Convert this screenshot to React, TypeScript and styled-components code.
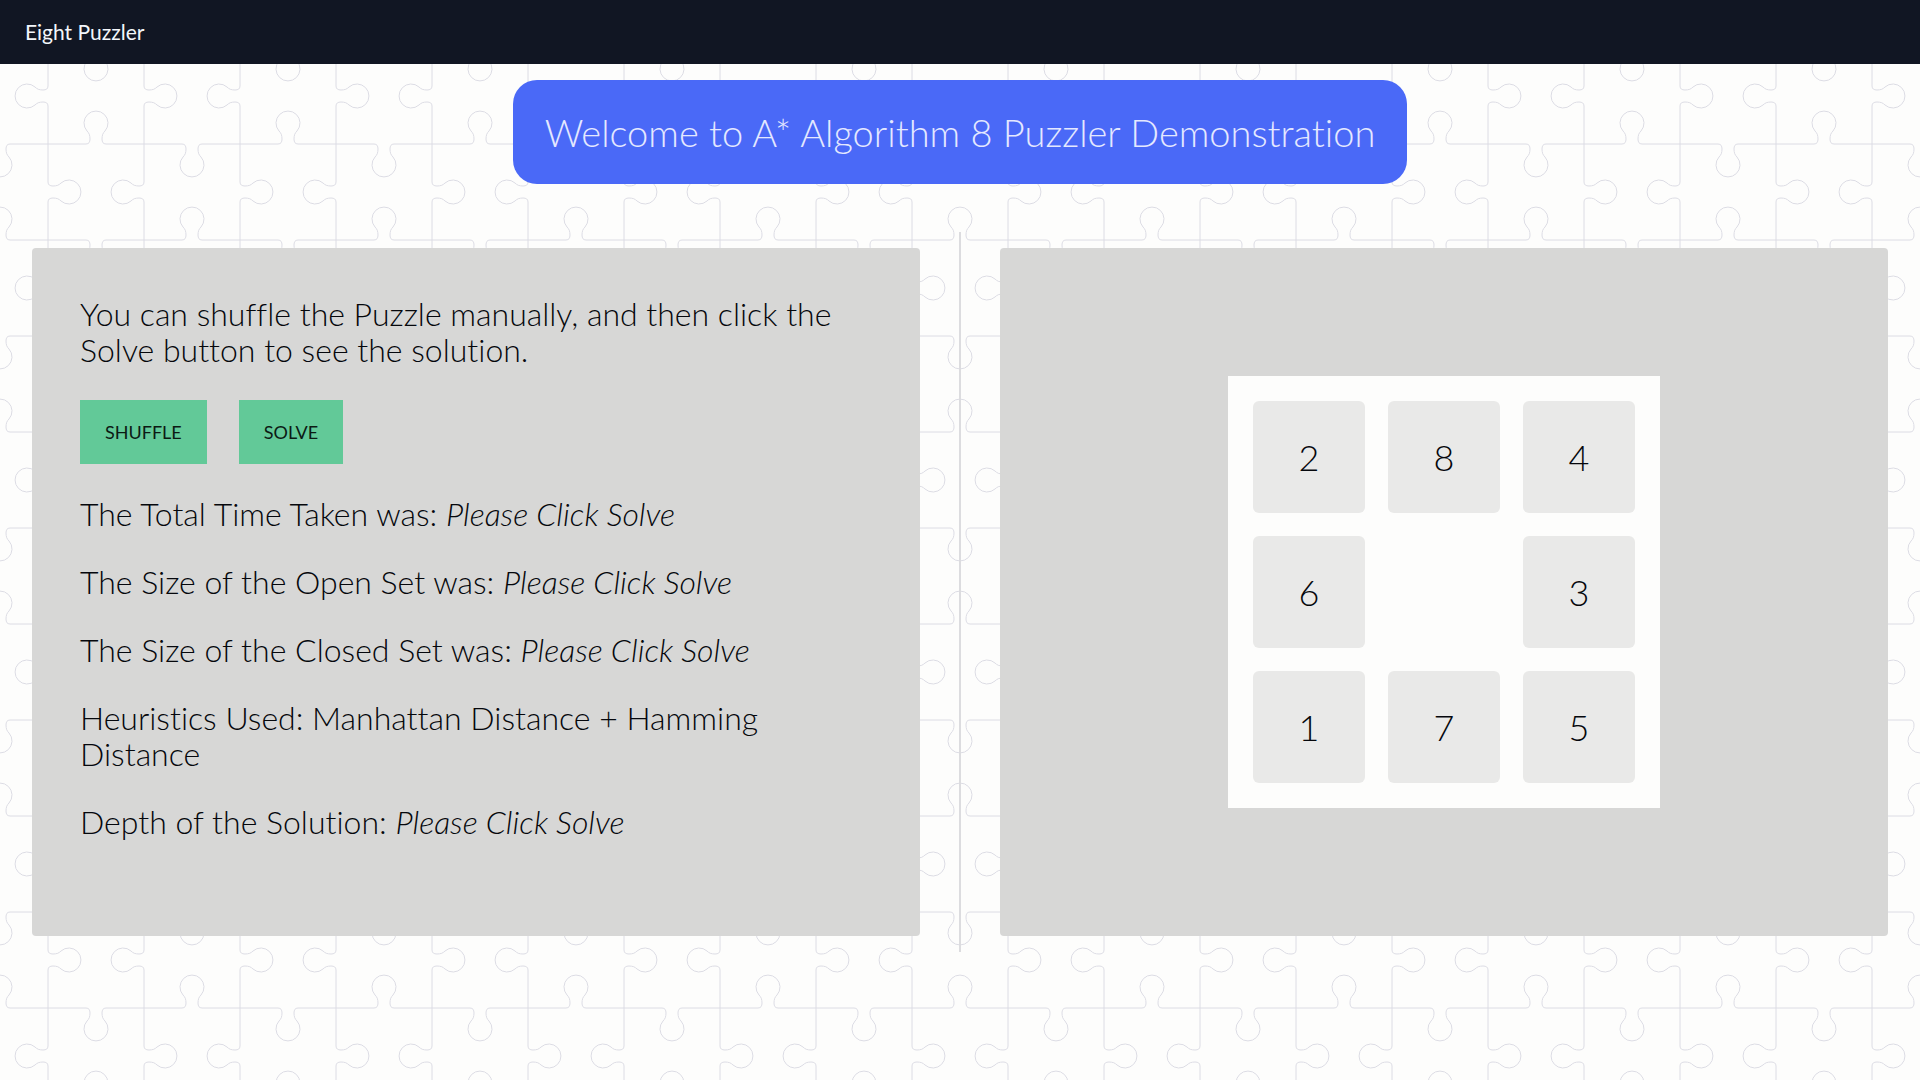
import React, { useState } from "react";
import styled, { createGlobalStyle } from "styled-components";

/* Repeating jigsaw outline: one 96px edge with a knob, placed around a 192px tile. */
const knobEdge =
  "M-48 0h38c3 0 4-2 4-5c0-4-1-6-3-8a12 12 0 1 1 18 0c-2 2-3 4-3 8c0 3 1 5 4 5h38";

const placeEdge = (x: number, y: number, turn: number) =>
  `<path d="${knobEdge}" transform="translate(${x} ${y}) rotate(${turn})"/>`;

const UP = 0;
const RIGHT = 90;
const DOWN = 180;
const LEFT = -90;

const jigsaw = [
  `<svg xmlns="http://www.w3.org/2000/svg" width="192" height="192">`,
  `<g fill="none" stroke="#dcdce4" stroke-width="1">`,
  placeEdge(0, 48, UP), placeEdge(96, 48, DOWN), placeEdge(192, 48, UP),
  placeEdge(0, 144, DOWN), placeEdge(96, 144, UP), placeEdge(192, 144, DOWN),
  placeEdge(48, 0, RIGHT), placeEdge(48, 96, LEFT), placeEdge(48, 192, RIGHT),
  placeEdge(144, 0, LEFT), placeEdge(144, 96, RIGHT), placeEdge(144, 192, LEFT),
  `</g></svg>`,
].join("");

const GlobalStyle = createGlobalStyle`
  *, *::before, *::after { box-sizing: border-box; }
  body {
    margin: 0;
    background: #fdfdfc url("data:image/svg+xml,${encodeURIComponent(jigsaw)
      .replace(/\(/g, "%28")
      .replace(/\)/g, "%29")}");
    color: #05070c;
    font-family: Lato, "Open Sans", sans-serif;
    font-weight: 300;
    font-variant-ligatures: none;
  }
  button { font: inherit; color: inherit; cursor: pointer; }
`;

const Page = styled.div`
  display: flex;
  flex-direction: column;
  min-height: 100vh;
`;

const NavBar = styled.header`
  display: flex;
  align-items: center;
  height: 64px;
  padding: 0 25px;
  background: #111623;
`;

const Brand = styled.a`
  color: #f3f6fb;
  font-size: 21px;
  font-weight: 400;
  line-height: 24px;
  text-decoration: none;
`;

const Banner = styled.h1`
  align-self: center;
  margin: 16px 16px 48px;
  padding: 32px;
  border-radius: 24px;
  background: #4a69f7;
  color: #e4e8ff;
  font-size: 38px;
  font-weight: 300;
  line-height: 40px;
`;

const Columns = styled.main`
  display: grid;
  grid-template-columns: minmax(0, 1fr) 80px minmax(0, 1fr);
  padding: 0 32px;
`;

const Panel = styled.section`
  margin: 16px 0;
  border-radius: 4px;
  background: #d7d7d6;
`;

const InfoPanel = styled(Panel)`
  display: flex;
  flex-direction: column;
  gap: 32px;
  padding: 48px 48px 96px;
`;

const BoardPanel = styled(Panel)`
  display: flex;
  align-items: center;
  justify-content: center;
`;

const Divider = styled.div`
  display: flex;
  justify-content: center;
  &::before {
    content: "";
    width: 2px;
    background: #dcdcdf;
  }
`;

const Line = styled.p`
  margin: 0;
  font-size: 32px;
  line-height: 36px;
`;

const Actions = styled.div`
  display: flex;
  gap: 32px;
`;

const ActionButton = styled.button`
  height: 64px;
  padding: 0 25px;
  border: 0;
  background: #62c998;
  color: #0c1a14;
  font-size: 18px;
  font-weight: 400;
`;

const Board = styled.div`
  display: grid;
  grid-template-columns: repeat(3, 112px);
  grid-auto-rows: 112px;
  gap: 23px;
  padding: 25px;
  background: #fdfdfc;
`;

const Tile = styled.button`
  padding: 0;
  border: 0;
  border-radius: 6px;
  background: #e9e9e8;
  font-size: 36px;
  line-height: 40px;
`;

const pending = "Please Click Solve";

const stats: { label: string; value?: string }[] = [
  { label: "The Total Time Taken was:", value: pending },
  { label: "The Size of the Open Set was:", value: pending },
  { label: "The Size of the Closed Set was:", value: pending },
  { label: "Heuristics Used: Manhattan Distance + Hamming Distance" },
  { label: "Depth of the Solution:", value: pending },
];

const start = [2, 8, 4, 6, 0, 3, 1, 7, 5];
const solved = [1, 2, 3, 4, 5, 6, 7, 8, 0];

function neighbours(index: number) {
  const row = Math.floor(index / 3);
  const col = index % 3;
  return [
    row > 0 ? index - 3 : -1,
    row < 2 ? index + 3 : -1,
    col > 0 ? index - 1 : -1,
    col < 2 ? index + 1 : -1,
  ].filter((n) => n >= 0);
}

function slide(tiles: number[], index: number) {
  const gap = tiles.indexOf(0);
  if (!neighbours(gap).includes(index)) return tiles;
  const next = [...tiles];
  next[gap] = tiles[index];
  next[index] = 0;
  return next;
}

function shuffle(tiles: number[]) {
  let next = tiles;
  for (let i = 0; i < 60; i += 1) {
    const options = neighbours(next.indexOf(0));
    next = slide(next, options[Math.floor(Math.random() * options.length)]);
  }
  return next;
}

export default function App() {
  const [tiles, setTiles] = useState(start);

  return (
    <>
      <GlobalStyle />
      <Page>
        <NavBar>
          <Brand href="#">Eight Puzzler</Brand>
        </NavBar>
        <Banner>Welcome to A* Algorithm 8 Puzzler Demonstration</Banner>
        <Columns>
          <InfoPanel>
            <Line>
              You can shuffle the Puzzle manually, and then click the Solve button to see the
              solution.
            </Line>
            <Actions>
              <ActionButton type="button" onClick={() => setTiles(shuffle)}>
                SHUFFLE
              </ActionButton>
              <ActionButton type="button" onClick={() => setTiles(solved)}>
                SOLVE
              </ActionButton>
            </Actions>
            {stats.map(({ label, value }) => (
              <Line key={label}>
                {label}
                {value && <> <em>{value}</em></>}
              </Line>
            ))}
          </InfoPanel>
          <Divider />
          <BoardPanel>
            <Board>
              {tiles.map((tile, index) =>
                tile === 0 ? (
                  <span key={tile} />
                ) : (
                  <Tile key={tile} type="button" onClick={() => setTiles(slide(tiles, index))}>
                    {tile}
                  </Tile>
                ),
              )}
            </Board>
          </BoardPanel>
        </Columns>
      </Page>
    </>
  );
}
